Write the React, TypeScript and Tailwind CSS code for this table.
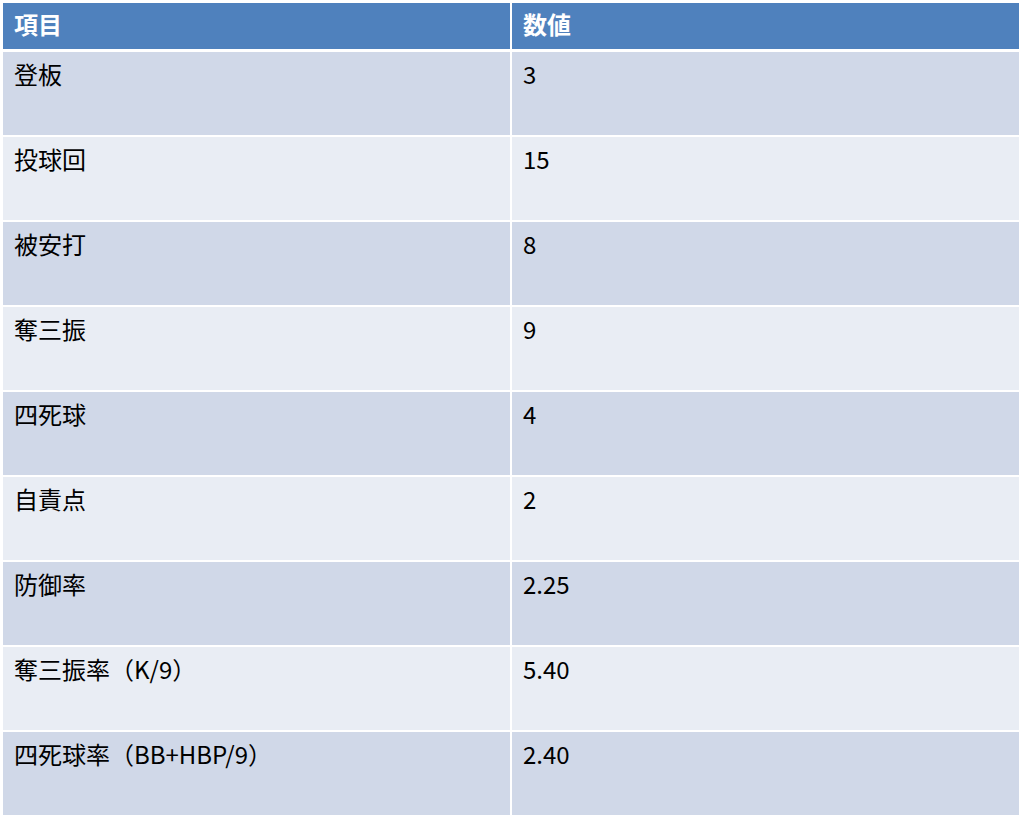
import React from "react";

const rows: [string, string][] = [
  ["登板", "3"],
  ["投球回", "15"],
  ["被安打", "8"],
  ["奪三振", "9"],
  ["四死球", "4"],
  ["自責点", "2"],
  ["防御率", "2.25"],
  ["奪三振率（K/9）", "5.40"],
  ["四死球率（BB+HBP/9）", "2.40"],
];

export default function App() {
  return (
    <div
      className="min-h-screen bg-white pl-[3px] pt-[3px]"
      style={{ fontFamily: '"Noto Sans CJK JP", "Noto Sans", sans-serif' }}
    >
      <div className="w-[1016px]">
        {/* Header */}
        <div className="grid grid-cols-2 gap-x-[2px]">
          {["項目", "数値"].map((h) => (
            <div
              key={h}
              className="h-[46px] bg-[#4f81bd] px-[11px] pt-[5px] text-[24px] leading-[32px] font-bold text-white"
            >
              {h}
            </div>
          ))}
        </div>

        {/* Body rows */}
        <div className="mt-[3px] grid grid-cols-2 gap-x-[2px] gap-y-[2px]">
          {rows.map(([label, value], i) => {
            const bg = i % 2 === 0 ? "bg-[#d0d8e8]" : "bg-[#e9edf4]";
            return (
              <React.Fragment key={label}>
                <div className={`h-[83px] ${bg} px-[11px] pt-[6px] text-[24px] leading-[32px] text-black`}>
                  {label}
                </div>
                <div className={`h-[83px] ${bg} px-[11px] pt-[6px] text-[24px] leading-[32px] text-black`}>
                  {value}
                </div>
              </React.Fragment>
            );
          })}
        </div>
      </div>
    </div>
  );
}
